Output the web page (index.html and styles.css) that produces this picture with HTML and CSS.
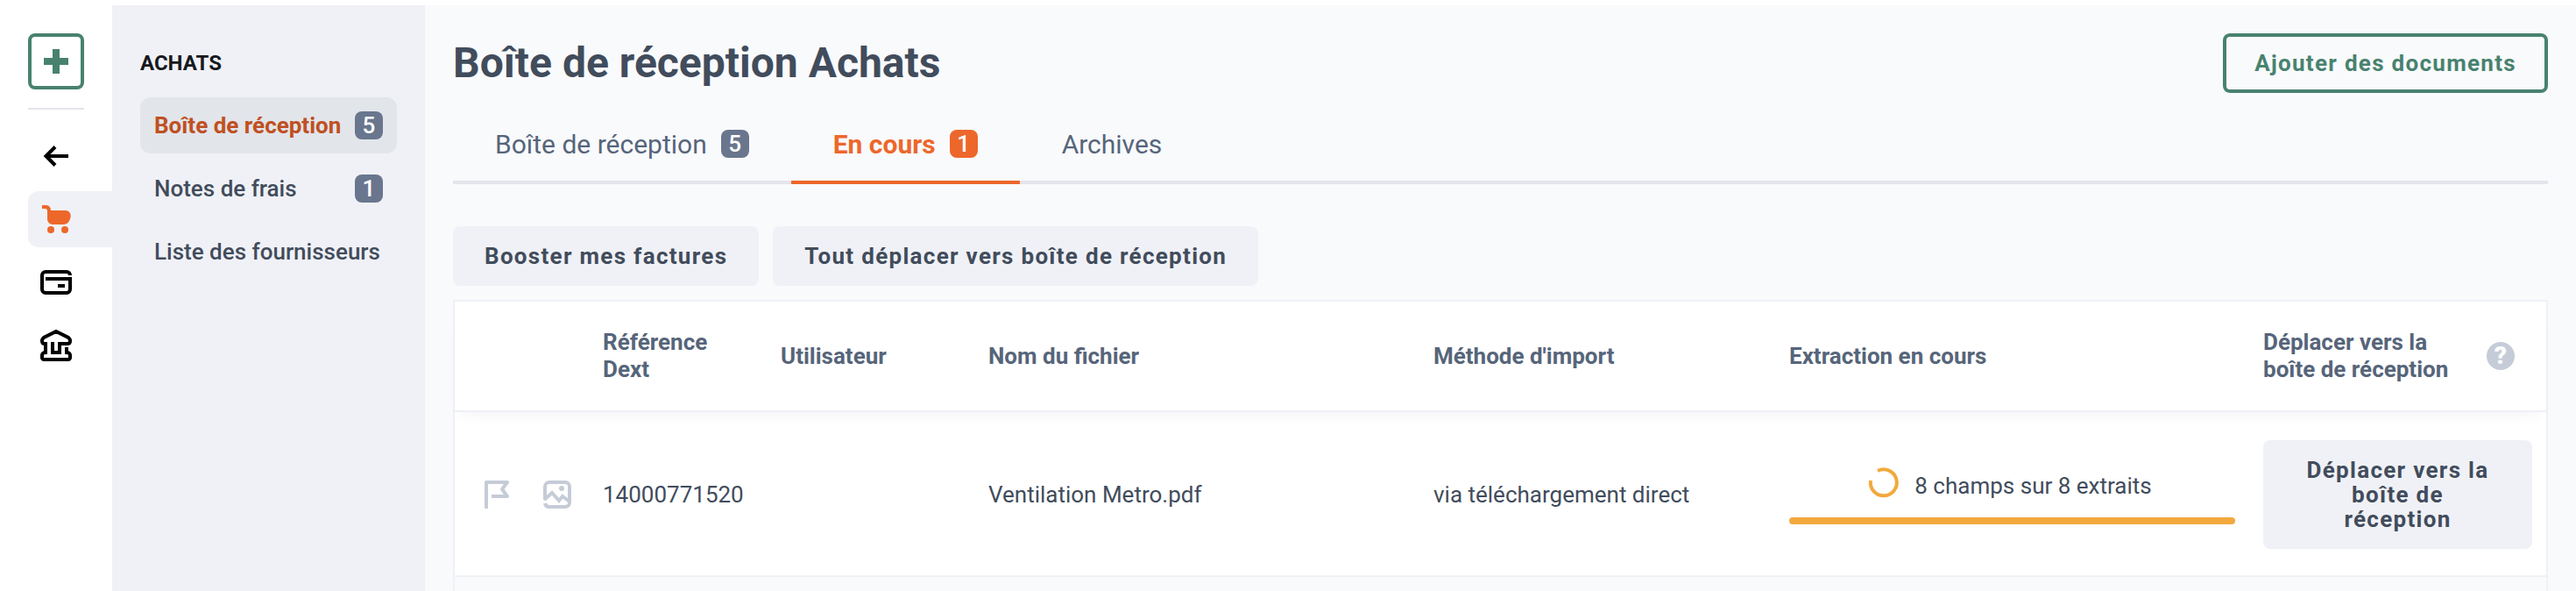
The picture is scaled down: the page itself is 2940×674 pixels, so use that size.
FILE: index.html
```html
<!DOCTYPE html>
<html lang="fr">
<head>
<meta charset="utf-8">
<title>Boîte de réception Achats</title>
<link rel="stylesheet" href="styles.css">
</head>
<body>
<div class="app">
  <nav class="rail" aria-label="Navigation principale">
    <button class="rail-add" type="button" aria-label="Ajouter">
      <svg width="28" height="28" viewBox="0 0 28 28"><path d="M10 0h8v10h10v8H18v10h-8V18H0v-8h10z" fill="currentColor"/></svg>
    </button>
    <hr class="rail-divider">
    <a class="rail-item" href="#retour" aria-label="Retour">
      <svg width="28" height="24" viewBox="0 0 28 24" fill="none" stroke="currentColor" stroke-width="4"><path d="M28 12H3M13 1.500L2.500 12 13 22.500"/></svg>
    </a>
    <a class="rail-item active" href="#achats" aria-label="Achats">
      <svg width="32" height="32" viewBox="0 0 32 32" fill="currentColor"><path d="M0 0h5c3 0 5 3 5 6h17c4 0 6.500 4 5.500 8l-1 3c-1 3-4 5-7 5H12c-3 0-6-3-6-6V7c0-2-1-3-2-3H0z"/><circle cx="10" cy="28" r="4"/><circle cx="26" cy="28" r="4"/></svg>
    </a>
    <a class="rail-item" href="#paiements" aria-label="Paiements">
      <svg width="36" height="28" viewBox="0 0 36 28" fill="none" stroke="currentColor" stroke-width="4"><path d="M34 6a4 4 0 0 0-4-4H6a4 4 0 0 0-4 4v16a4 4 0 0 0 4 4h24a4 4 0 0 0 4-4V10H6M20 18h8"/></svg>
    </a>
    <a class="rail-item" href="#banque" aria-label="Banque">
      <svg width="36" height="36" viewBox="0 0 36 36" fill="none" stroke="currentColor" stroke-width="4"><path d="M14 14v12h8V16h9c2 0 3-1 3-3v-1c0-1-1-2-2-3L18 2 4 9c-1 1-2 2-2 3v1c0 2 1 3 3 3h1v10c-2 0-4 1-4 3v3c0 1 1 2 2 2h28c1 0 2-1 2-2v-3c0-2-2-3-4-3v-6"/></svg>
    </a>
  </nav>

  <aside class="sidebar">
    <h2 class="sidebar-title">ACHATS</h2>
    <a class="side-link active" href="#boite">Boîte de réception <span class="badge">5</span></a>
    <a class="side-link" href="#notes">Notes de frais <span class="badge">1</span></a>
    <a class="side-link" href="#fournisseurs">Liste des fournisseurs</a>
  </aside>

  <main class="main">
    <header class="page-head">
      <h1 class="page-title">Boîte de réception Achats</h1>
      <button class="btn btn-outline" type="button">Ajouter des documents</button>
    </header>

    <nav class="tabs" aria-label="Onglets">
      <a class="tab" href="#reception">Boîte de réception <span class="badge">5</span></a>
      <a class="tab active" href="#encours" aria-current="page">En cours <span class="badge">1</span></a>
      <a class="tab" href="#archives">Archives</a>
    </nav>

    <div class="actions">
      <button class="btn" type="button">Booster mes factures</button>
      <button class="btn" type="button">Tout déplacer vers boîte de réception</button>
    </div>

    <div class="table-box">
      <table class="docs">
        <colgroup>
          <col class="c-icons"><col class="c-ref"><col class="c-user"><col class="c-file"><col class="c-method"><col class="c-progress"><col class="c-move">
        </colgroup>
        <thead>
          <tr>
            <td></td>
            <th scope="col">Référence Dext</th>
            <th scope="col">Utilisateur</th>
            <th scope="col">Nom du fichier</th>
            <th scope="col">Méthode d'import</th>
            <th scope="col">Extraction en cours</th>
            <th scope="col">
              <div class="move-head">
                <span>Déplacer vers la<br>boîte de réception</span>
                <button class="help" type="button" aria-label="Aide">?</button>
              </div>
            </th>
          </tr>
        </thead>
        <tbody>
          <tr>
            <td class="icons-cell">
              <div class="row-icons">
                <svg width="32" height="32" viewBox="0 0 32 32" fill="none" stroke="currentColor" stroke-width="4" stroke-linejoin="round"><path d="M3 32V2h24l-6 8 6 8H9"/></svg>
                <svg width="32" height="32" viewBox="0 0 32 32" fill="none" stroke="currentColor" stroke-width="4"><path d="M2 22V7a5 5 0 0 1 5-5h18a5 5 0 0 1 5 5v18a5 5 0 0 1-5 5H7a5 5 0 0 1-5-4M1 22l9-8 8 9 4-5 8 6"/><circle cx="21" cy="9" r="3" fill="currentColor" stroke="none"/></svg>
              </div>
            </td>
            <td>14000771520</td>
            <td></td>
            <td>Ventilation Metro.pdf</td>
            <td>via téléchargement direct</td>
            <td>
              <div class="progress">
                <div class="progress-label">
                  <svg width="34" height="34" viewBox="0 0 34 34" fill="none" stroke="currentColor" stroke-width="4"><path d="M10 4a15 15 0 1 1-8 11"/></svg>
                  <span>8 champs sur 8 extraits</span>
                </div>
                <div class="progress-bar"></div>
              </div>
            </td>
            <td><button class="btn btn-move" type="button">Déplacer vers la boîte de réception</button></td>
          </tr>
        </tbody>
      </table>
    </div>
  </main>
</div>
</body>
</html>
```
FILE: styles.css
```css
* { box-sizing: border-box; }

body {
  margin: 0;
  background: #fff;
  color: #414c5c;
  font-family: Roboto, "Liberation Sans", sans-serif;
  font-size: 26px;
}

a { color: inherit; text-decoration: none; }
button { font: inherit; cursor: pointer; }
svg { display: block; flex: none; overflow: visible; }

.app {
  display: flex;
  min-height: 100vh;
  border-top: 6px solid #fff;
}

/* Icon rail */
.rail {
  width: 128px;
  flex: none;
  display: flex;
  flex-direction: column;
  gap: 8px;
  padding: 32px 0 0 32px;
}
.rail-add {
  width: 64px;
  height: 64px;
  display: flex;
  align-items: center;
  justify-content: center;
  padding: 0;
  border: 4px solid #48826f;
  border-radius: 8px;
  background: #fff;
  color: #48826f;
}
.rail-divider {
  width: 64px;
  height: 2px;
  margin: 13px 0;
  border: 0;
  background: #e2e5ea;
}
.rail-item {
  height: 64px;
  display: flex;
  align-items: center;
  justify-content: center;
  padding-right: 32px;
  color: #000;
}
.rail-item.active {
  background: #f0f1f6;
  border-radius: 12px 0 0 12px;
  color: #ed672b;
}

/* Section sidebar */
.sidebar {
  width: 357px;
  flex: none;
  display: flex;
  flex-direction: column;
  gap: 8px;
  padding: 48px 32px;
  background: #f0f1f6;
}
.sidebar-title {
  margin: 0 0 13px;
  color: #16191d;
  font-size: 24px;
  font-weight: 700;
  line-height: 36px;
}
.side-link {
  height: 64px;
  display: flex;
  align-items: center;
  justify-content: space-between;
  padding: 0 16px;
  border-radius: 12px;
  font-weight: 500;
  white-space: nowrap;
}
.side-link.active {
  background: #e2e5ea;
  color: #bf5021;
  font-weight: 700;
}

.badge {
  min-width: 32px;
  height: 32px;
  display: inline-flex;
  align-items: center;
  justify-content: center;
  border-radius: 8px;
  background: #69768e;
  color: #fff;
  font-size: 26px;
  font-weight: 500;
}

/* Page */
.main {
  flex: 1;
  min-width: 0;
  display: flex;
  flex-direction: column;
  padding: 32px 32px 0;
  background: #f9fafc;
}
.page-head {
  display: flex;
  align-items: center;
  justify-content: space-between;
}
.page-title {
  margin: 0;
  font-size: 48px;
  font-weight: 700;
  line-height: 64px;
}

.btn {
  padding: 20px 36px;
  border: 0;
  border-radius: 8px;
  background: #f0f1f6;
  color: #414c5c;
  font-weight: 700;
  line-height: 28px;
  letter-spacing: 0.05em;
}
.btn-outline {
  padding: 16px 32px;
  border: 4px solid #48826f;
  background: transparent;
  color: #48826f;
}

.tabs {
  display: flex;
  margin-top: 16px;
  box-shadow: inset 0 -4px #e3e4ec;
}
.tab {
  display: flex;
  align-items: center;
  gap: 16px;
  height: 88px;
  padding: 0 48px;
  border-bottom: 4px solid transparent;
  color: #56657a;
  font-size: 30px;
}
.tab.active {
  border-color: #ed672b;
  color: #ed672b;
  font-weight: 700;
}
.tab.active .badge { background: #ed672b; }

.actions {
  display: flex;
  gap: 16px;
  margin: 48px 0 16px;
}

/* Documents table */
.table-box {
  flex: 1;
  border: 2px solid #f0f1f6;
  border-bottom: 0;
}
.docs {
  width: 100%;
  table-layout: fixed;
  border-collapse: separate;
  border-spacing: 0;
  background: #fff;
}
.c-icons { width: 153px; }
.c-ref { width: 203px; }
.c-user { width: 237px; }
.c-method { width: 406px; }
.c-progress { width: 541px; }
.c-move { width: 339px; }

.docs th,
.docs td {
  padding: 0 16px;
  border-bottom: 2px solid #f0f1f6;
  text-align: left;
  vertical-align: middle;
  line-height: 31px;
}
.docs thead { box-shadow: 0 12px 16px -8px #1c20380a; }
.docs th {
  height: 126px;
  color: #56657a;
  font-weight: 700;
}
.docs tbody td {
  padding-top: 32px;
  padding-bottom: 30px;
}
.docs tbody .icons-cell { padding-left: 33px; }

.move-head {
  display: flex;
  align-items: center;
  justify-content: space-between;
  padding-right: 20px;
  white-space: nowrap;
}
.help {
  width: 32px;
  height: 32px;
  padding: 0;
  border: 0;
  border-radius: 50%;
  background: #c5ccd7;
  color: #fff;
  font-size: 28px;
  font-weight: 900;
  line-height: 32px;
}

.row-icons {
  display: flex;
  gap: 36px;
  color: #c5ccd7;
}

.progress-label {
  display: flex;
  align-items: center;
  justify-content: center;
  gap: 18px;
  margin-bottom: 20px;
  padding-right: 4px;
}
.progress-label svg { color: #f2a93c; }
.progress-label span { padding-top: 8px; }
.progress-bar {
  height: 8px;
  border-radius: 4px;
  background: #f2a93c;
}
.btn-move {
  width: 100%;
  padding: 20px 48px;
}
```
